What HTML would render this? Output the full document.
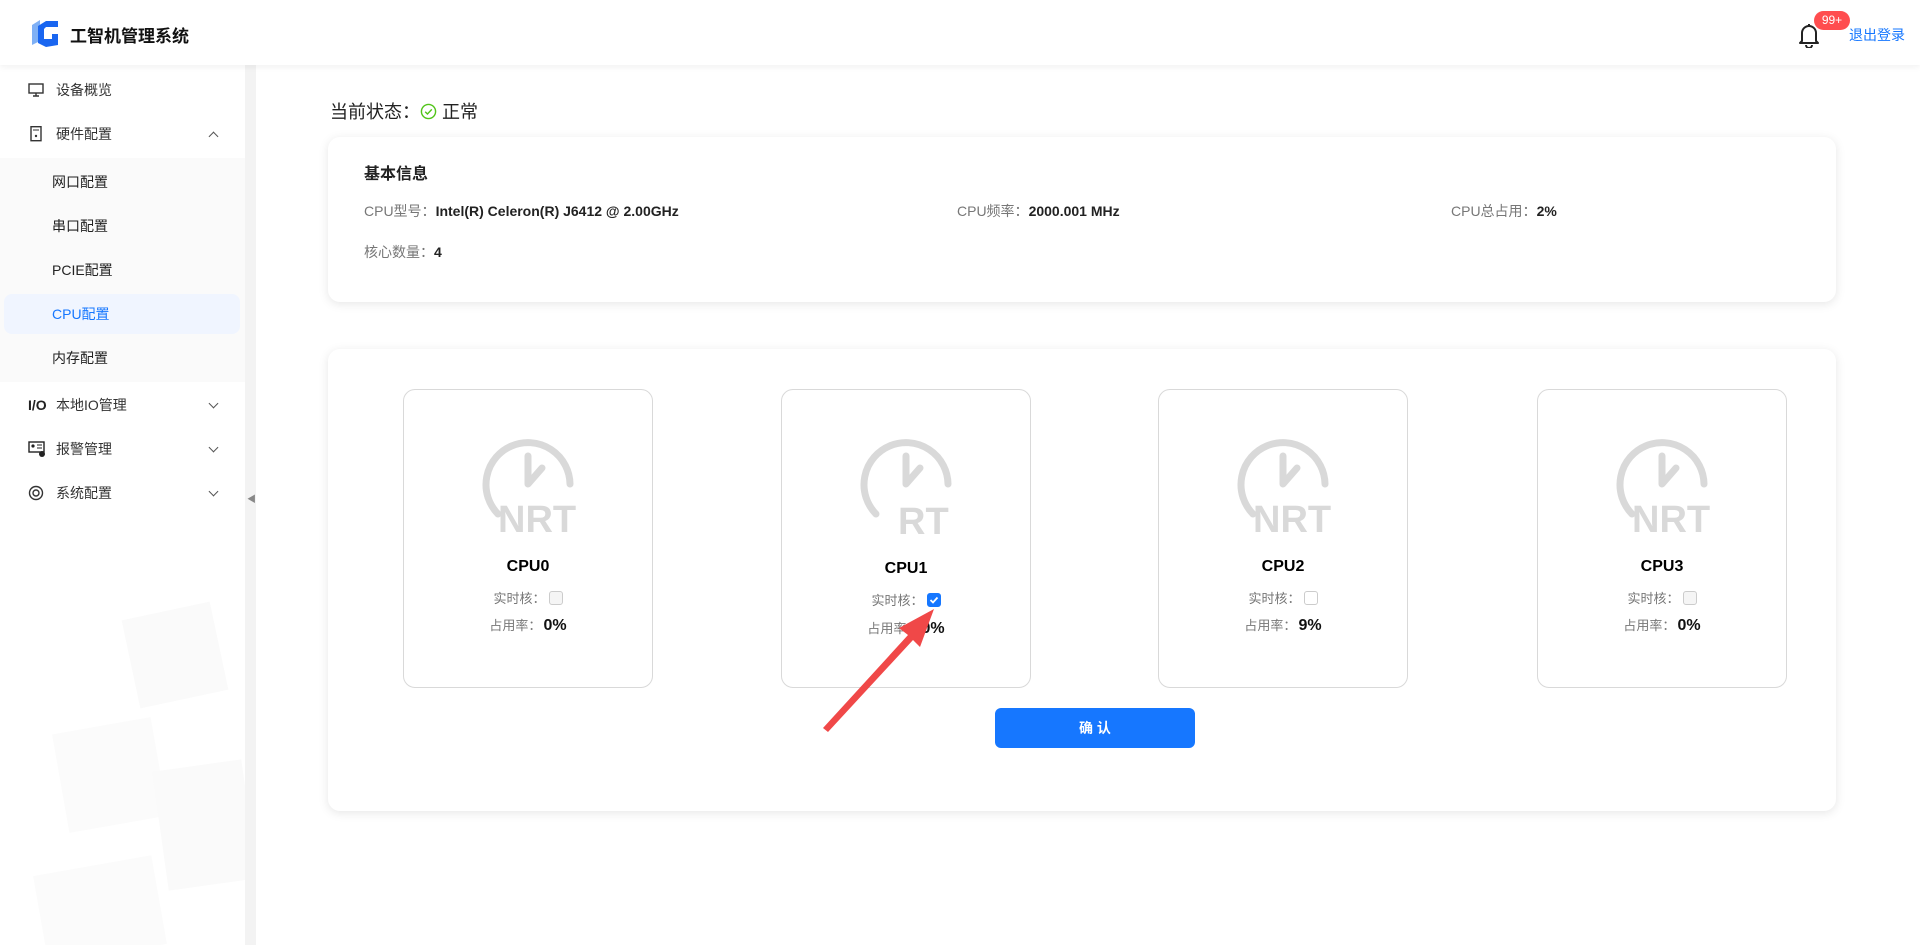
<!DOCTYPE html>
<html><head><meta charset="utf-8">
<style>
*{margin:0;padding:0;box-sizing:border-box}
body{width:1920px;height:945px;overflow:hidden;background:#fff;font-family:"Liberation Sans","Noto Sans CJK SC",sans-serif;color:#000;position:relative}
.hdr{position:absolute;left:0;top:0;width:1920px;height:65px;background:#fff;box-shadow:0 2px 6px rgba(0,0,0,.06);z-index:5}
.title{position:absolute;left:70px;top:22px;font-size:17px;font-weight:bold;color:#111}
.side{position:absolute;left:0;top:65px;width:245px;height:880px;background:#fff;overflow:hidden}
.strip{position:absolute;left:245px;top:65px;width:11px;height:880px;background:#f3f3f3}
.mi{position:absolute;left:0;width:245px;height:40px;font-size:14px;color:#333;line-height:40px}
.mi .ic{position:absolute;left:28px;top:13px;width:16px;height:14px}
.mi .tx{position:absolute;left:56px}
.mi .ch{position:absolute;left:210px;top:15px;width:7px;height:7px;border-right:1.6px solid #555;border-bottom:1.6px solid #555;transform:rotate(45deg)}
.mi .ch.up{top:19px;transform:rotate(-135deg)}
.sub{position:absolute;left:0;top:93px;width:245px;height:224px;background:#fafafa}
.si{position:absolute;left:52px;font-size:14px;color:#222;line-height:20px}
.sel{position:absolute;left:4px;top:229px;width:236px;height:40px;background:#f0f5ff;border-radius:8px}
.card{position:absolute;background:#fff;border-radius:12px;box-shadow:0 2px 10px rgba(0,0,0,.1)}
.lbl{color:#777;font-size:14px}
.val{font-weight:bold;font-size:14px;color:#222}
.cpu{position:absolute;top:389px;width:250px;height:299px;border:1px solid #d9d9d9;border-radius:12px;background:#fff}
.cpu .nm{position:absolute;top:168px;width:100%;text-align:center;font-weight:bold;font-size:16px}
.cpu .r1{position:absolute;top:198px;width:100%;text-align:center;font-size:13px;color:#777}
.cb{display:inline-block;width:14px;height:14px;border:1px solid #ccc;border-radius:3px;background:#f5f5f5;vertical-align:-2px;margin-left:3px}
.cpu .r2{position:absolute;top:225px;width:100%;text-align:center;font-size:13px;color:#777}
.cpu .r2 b{color:#111;font-size:16px;margin-left:2px}
.cpu svg{position:absolute;left:72px;top:42px}
</style></head><body>
<div class="hdr">
<svg style="position:absolute;left:28px;top:17px" width="32" height="32" viewBox="0 0 32 32"><path d="M4 8 L12 3 L12 24 L4 28Z" fill="#7fb0f5"/><path d="M10 9 L18 4 L30 4 L30 10 L18 10 L16 12 L16 22 L24 22 L24 17 L30 17 L30 28 L18 30 L10 26Z" fill="#1a66f0"/></svg>
<div class="title">工智机管理系统</div>
<svg style="position:absolute;left:1798px;top:22px" width="22" height="26" viewBox="0 0 22 26"><path d="M4 19 L4 11 A7 7 0 0 1 18 11 L18 19 L20 21 L2 21 Z" fill="none" stroke="#222" stroke-width="2" stroke-linejoin="round"/><path d="M8 23 A3 3 0 0 0 14 23" fill="none" stroke="#222" stroke-width="2"/><path d="M11 2 L11 4" stroke="#222" stroke-width="2"/></svg>
<div style="position:absolute;left:1814px;top:11px;width:36px;height:19px;border-radius:10px;background:#ff4d4f;color:#fff;font-size:12px;text-align:center;line-height:19px">99+</div>
<div style="position:absolute;left:1849px;top:25px;font-size:14px;color:#1677ff">退出登录</div>
</div>
<div class="side">
<div style="position:absolute;left:130px;top:545px;width:90px;height:90px;background:#fafafa;transform:rotate(-12deg)"></div>
<div style="position:absolute;left:60px;top:660px;width:100px;height:100px;background:#fbfbfb;transform:rotate(-10deg)"></div>
<div style="position:absolute;left:160px;top:700px;width:90px;height:120px;background:#fafafa;transform:rotate(-8deg)"></div>
<div style="position:absolute;left:40px;top:800px;width:120px;height:90px;background:#fbfbfb;transform:rotate(-10deg)"></div>
<div class="mi" style="top:5px"><svg class="ic" viewBox="0 0 16 14"><rect x="1" y="1" width="14" height="9" fill="none" stroke="#333" stroke-width="1.4"/><path d="M8 10v3M5 13h6" stroke="#333" stroke-width="1.4"/></svg><span class="tx">设备概览</span></div>
<div class="mi" style="top:49px"><svg class="ic" viewBox="0 0 16 16" style="top:12px;height:16px"><rect x="3" y="0.7" width="10" height="14" fill="none" stroke="#333" stroke-width="1.4"/><path d="M5 4h6" stroke="#333"/><circle cx="8" cy="10" r="1.2" fill="#333"/></svg><span class="tx">硬件配置</span><span class="ch up"></span></div>
<div class="sub"></div>
<div class="sel"></div>
<div class="si" style="top:107px">网口配置</div>
<div class="si" style="top:151px">串口配置</div>
<div class="si" style="top:195px">PCIE配置</div>
<div class="si" style="top:239px;color:#1677ff">CPU配置</div>
<div class="si" style="top:283px">内存配置</div>
<div class="mi" style="top:320px"><span style="position:absolute;left:28px;font-weight:bold;font-size:14px;color:#222">I/O</span><span class="tx">本地IO管理</span><span class="ch"></span></div>
<div class="mi" style="top:364px"><svg class="ic" viewBox="0 0 18 16" style="width:18px;height:16px;top:12px"><rect x="1" y="1" width="15" height="10" fill="none" stroke="#222" stroke-width="1.4"/><circle cx="5" cy="5" r="1.6" fill="#222"/><path d="M9 4h5M9 7h5" stroke="#222"/><circle cx="14" cy="13" r="3" fill="#222"/></svg><span class="tx">报警管理</span><span class="ch"></span></div>
<div class="mi" style="top:408px"><svg class="ic" viewBox="0 0 16 16" style="height:16px;top:12px"><circle cx="8" cy="8" r="6.5" fill="none" stroke="#333" stroke-width="1.4"/><circle cx="8" cy="8" r="3" fill="none" stroke="#333" stroke-width="1.4"/></svg><span class="tx">系统配置</span><span class="ch"></span></div>
</div>
<div class="strip"><span style="position:absolute;left:2px;top:427px;font-size:9px;color:#888">◀</span></div>

<div style="position:absolute;left:330px;top:98px;font-size:18px;color:#222">当前状态：<svg width="17" height="17" viewBox="0 0 18 18" style="vertical-align:-2px"><circle cx="9" cy="9" r="7.5" fill="none" stroke="#52c41a" stroke-width="1.5"/><path d="M5.5 9.2l2.4 2.4 4.6-4.8" fill="none" stroke="#52c41a" stroke-width="1.5"/></svg> 正常</div>

<div class="card" style="left:328px;top:137px;width:1508px;height:165px">
<div style="position:absolute;left:36px;top:23px;font-size:16px;font-weight:bold;color:#222">基本信息</div>
<div style="position:absolute;left:36px;top:64px"><span class="lbl">CPU型号：</span><span class="val">Intel(R) Celeron(R) J6412 @ 2.00GHz</span></div>
<div style="position:absolute;left:629px;top:64px"><span class="lbl">CPU频率：</span><span class="val">2000.001 MHz</span></div>
<div style="position:absolute;left:1123px;top:64px"><span class="lbl">CPU总占用：</span><span class="val">2%</span></div>
<div style="position:absolute;left:36px;top:105px"><span class="lbl">核心数量：</span><span class="val">4</span></div>
</div>

<div class="card" style="left:328px;top:349px;width:1508px;height:462px"></div>

<div class="cpu" style="left:403px">
<svg width="110" height="110" viewBox="0 0 110 110"><path d="M22 82 A42 42 0 1 1 94 52" fill="none" stroke="#d9d9d9" stroke-width="7" stroke-linecap="round"/><path d="M52 24 L52 52 L66 36" fill="none" stroke="#d9d9d9" stroke-width="7" stroke-linecap="round" stroke-linejoin="round"/><text x="22" y="100" font-family="Liberation Sans" font-weight="bold" font-size="38" fill="#d9d9d9">NRT</text></svg>
<div class="nm">CPU0</div><div class="r1">实时核：<span class="cb"></span></div><div class="r2">占用率：<b>0%</b></div></div>
<div class="cpu" style="left:781px">
<svg width="110" height="110" viewBox="0 0 110 110"><path d="M22 82 A42 42 0 1 1 94 52" fill="none" stroke="#d9d9d9" stroke-width="7" stroke-linecap="round"/><path d="M52 24 L52 52 L66 36" fill="none" stroke="#d9d9d9" stroke-width="7" stroke-linecap="round" stroke-linejoin="round"/><text x="44" y="102" font-family="Liberation Sans" font-weight="bold" font-size="38" fill="#d9d9d9">RT</text></svg>
<div class="nm" style="top:170px">CPU1</div><div class="r1" style="top:200px">实时核：<span class="cb" style="background:#1677ff;border-color:#1677ff;position:relative"><svg width="12" height="12" viewBox="0 0 12 12" style="position:absolute;left:0;top:0"><path d="M2.5 6l2.5 2.5 4.5-5" fill="none" stroke="#fff" stroke-width="1.8"/></svg></span></div><div class="r2" style="top:228px">占用率：<b>0%</b></div></div>
<div class="cpu" style="left:1158px">
<svg width="110" height="110" viewBox="0 0 110 110"><path d="M22 82 A42 42 0 1 1 94 52" fill="none" stroke="#d9d9d9" stroke-width="7" stroke-linecap="round"/><path d="M52 24 L52 52 L66 36" fill="none" stroke="#d9d9d9" stroke-width="7" stroke-linecap="round" stroke-linejoin="round"/><text x="22" y="100" font-family="Liberation Sans" font-weight="bold" font-size="38" fill="#d9d9d9">NRT</text></svg>
<div class="nm">CPU2</div><div class="r1">实时核：<span class="cb" style="background:#fff"></span></div><div class="r2">占用率：<b>9%</b></div></div>
<div class="cpu" style="left:1537px">
<svg width="110" height="110" viewBox="0 0 110 110"><path d="M22 82 A42 42 0 1 1 94 52" fill="none" stroke="#d9d9d9" stroke-width="7" stroke-linecap="round"/><path d="M52 24 L52 52 L66 36" fill="none" stroke="#d9d9d9" stroke-width="7" stroke-linecap="round" stroke-linejoin="round"/><text x="22" y="100" font-family="Liberation Sans" font-weight="bold" font-size="38" fill="#d9d9d9">NRT</text></svg>
<div class="nm">CPU3</div><div class="r1">实时核：<span class="cb"></span></div><div class="r2">占用率：<b>0%</b></div></div>

<div style="position:absolute;left:995px;top:708px;width:200px;height:40px;background:#1677ff;border-radius:6px;color:#fff;font-size:14px;font-weight:bold;text-align:center;line-height:40px">确 认</div>

<svg style="position:absolute;left:810px;top:595px" width="140" height="145" viewBox="0 0 140 145"><path d="M13 133 L98 40 L89 33 L124 14 L110 52 L103 45 L18 137 Z" fill="#f04848"/></svg>
</body></html>
